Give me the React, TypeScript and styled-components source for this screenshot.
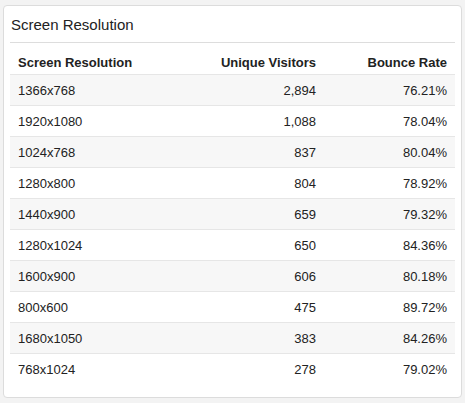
import React from "react";
import styled, { createGlobalStyle } from "styled-components";

const G = createGlobalStyle`
  body { margin: 0; background: #f3f3f3; font-family: "Liberation Sans", Arial, sans-serif; }
`;
const Page = styled.div`padding: 5px 3px;`;
const Card = styled.div`
  background: #fff; border: 1px solid #dcdcdc; border-radius: 4px;
  padding: 0 6px 12px 6px; height: 393px; box-sizing: border-box;
`;
const Title = styled.h3`
  margin: 0; font-weight: normal; font-size: 15px; color: #222;
  padding: 10px 1px 8px; border-bottom: 1px solid #ddd; line-height: 18px;
`;
const Table = styled.table`
  width: 100%; border-collapse: collapse; margin-top: 7px; font-size: 13px; color: #222;
`;
const Th = styled.th<{ $right?: boolean }>`
  text-align: ${p => (p.$right ? "right" : "left")}; font-weight: bold;
  padding: 0 8px; height: 24px; vertical-align: middle;
`;
const Tr = styled.tr<{ $odd: boolean }>`
  background: ${p => (p.$odd ? "#f7f7f7" : "#fff")};
  border-top: 1px solid #e6e6e6;
`;
const Td = styled.td<{ $right?: boolean }>`
  text-align: ${p => (p.$right ? "right" : "left")};
  padding: 0 8px; height: 30px;
`;
const rows = [
  ["1366x768", "2,894", "76.21%"], ["1920x1080", "1,088", "78.04%"], ["1024x768", "837", "80.04%"],
  ["1280x800", "804", "78.92%"], ["1440x900", "659", "79.32%"], ["1280x1024", "650", "84.36%"],
  ["1600x900", "606", "80.18%"], ["800x600", "475", "89.72%"], ["1680x1050", "383", "84.26%"],
  ["768x1024", "278", "79.02%"],
];
export default function App() {
  return (
    <Page>
      <G />
      <Card>
        <Title>Screen Resolution</Title>
        <Table>
          <colgroup><col style={{ width: 160 }} /><col style={{ width: 154 }} /><col /></colgroup>
          <thead><tr><Th>Screen Resolution</Th><Th $right>Unique Visitors</Th><Th $right>Bounce Rate</Th></tr></thead>
          <tbody>
            {rows.map((r, i) => (
              <Tr key={i} $odd={i % 2 === 0}><Td>{r[0]}</Td><Td $right>{r[1]}</Td><Td $right>{r[2]}</Td></Tr>
            ))}
          </tbody>
        </Table>
      </Card>
    </Page>
  );
}
